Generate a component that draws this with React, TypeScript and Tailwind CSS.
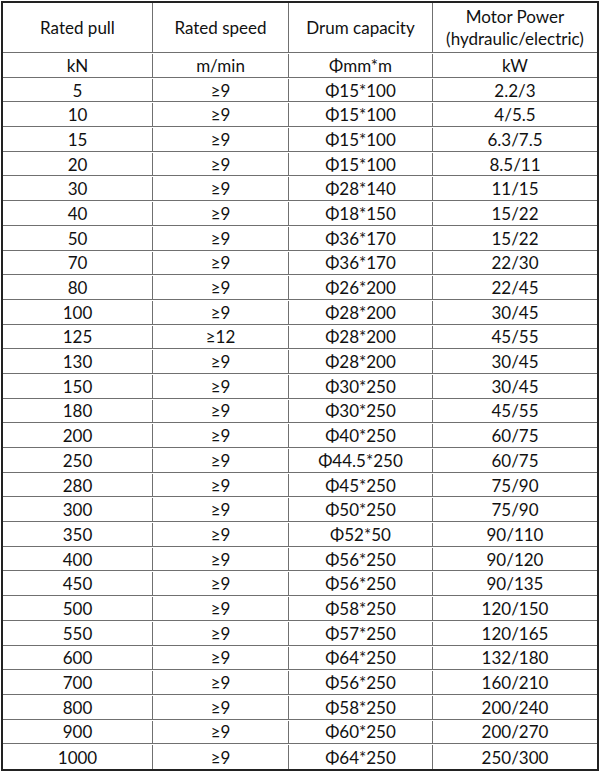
const rows: [string, string, string, string][] = [
  ['kN', 'm/min', 'Φmm*m', 'kW'],
  ['5', '≥9', 'Φ15*100', '2.2/3'],
  ['10', '≥9', 'Φ15*100', '4/5.5'],
  ['15', '≥9', 'Φ15*100', '6.3/7.5'],
  ['20', '≥9', 'Φ15*100', '8.5/11'],
  ['30', '≥9', 'Φ28*140', '11/15'],
  ['40', '≥9', 'Φ18*150', '15/22'],
  ['50', '≥9', 'Φ36*170', '15/22'],
  ['70', '≥9', 'Φ36*170', '22/30'],
  ['80', '≥9', 'Φ26*200', '22/45'],
  ['100', '≥9', 'Φ28*200', '30/45'],
  ['125', '≥12', 'Φ28*200', '45/55'],
  ['130', '≥9', 'Φ28*200', '30/45'],
  ['150', '≥9', 'Φ30*250', '30/45'],
  ['180', '≥9', 'Φ30*250', '45/55'],
  ['200', '≥9', 'Φ40*250', '60/75'],
  ['250', '≥9', 'Φ44.5*250', '60/75'],
  ['280', '≥9', 'Φ45*250', '75/90'],
  ['300', '≥9', 'Φ50*250', '75/90'],
  ['350', '≥9', 'Φ52*50', '90/110'],
  ['400', '≥9', 'Φ56*250', '90/120'],
  ['450', '≥9', 'Φ56*250', '90/135'],
  ['500', '≥9', 'Φ58*250', '120/150'],
  ['550', '≥9', 'Φ57*250', '120/165'],
  ['600', '≥9', 'Φ64*250', '132/180'],
  ['700', '≥9', 'Φ56*250', '160/210'],
  ['800', '≥9', 'Φ58*250', '200/240'],
  ['900', '≥9', 'Φ60*250', '200/270'],
  ['1000', '≥9', 'Φ64*250', '250/300'],
]

const cell = 'flex items-center justify-center border-r border-b border-[#707070] text-center'

export default function App() {
  return (
    <div
      className="w-[600px] h-[773px] bg-white pt-px pl-px text-[17px] text-[#111]"
      style={{ fontFamily: 'Lato, "Open Sans", sans-serif' }}
    >
      <div className="w-[598px] h-[770px] border-2 border-[#222] flex flex-col">
        {/* Header */}
        <div className="flex h-[50px] shrink-0">
          <div className={`${cell} w-[150px]`}>Rated pull</div>
          <div className={`${cell} w-[136px]`}>Rated speed</div>
          <div className={`${cell} w-[144px]`}>Drum capacity</div>
          <div className={`${cell} flex-1 border-r-0 flex-col leading-[22px]`}>
            <span>Motor Power</span>
            <span>(hydraulic/electric)</span>
          </div>
        </div>

        {/* Body */}
        {rows.map((r, i) => {
          const last = i === rows.length - 1 ? 'border-b-0' : ''
          return (
            <div key={i} className="flex flex-1 min-h-0 leading-none pt-px">
              <div className={`${cell} w-[150px] ${last}`}>{r[0]}</div>
              <div className={`${cell} w-[136px] ${last}`}>{r[1]}</div>
              <div className={`${cell} w-[144px] ${last}`}>{r[2]}</div>
              <div className={`${cell} flex-1 border-r-0 ${last}`}>{r[3]}</div>
            </div>
          )
        })}
      </div>
    </div>
  )
}
